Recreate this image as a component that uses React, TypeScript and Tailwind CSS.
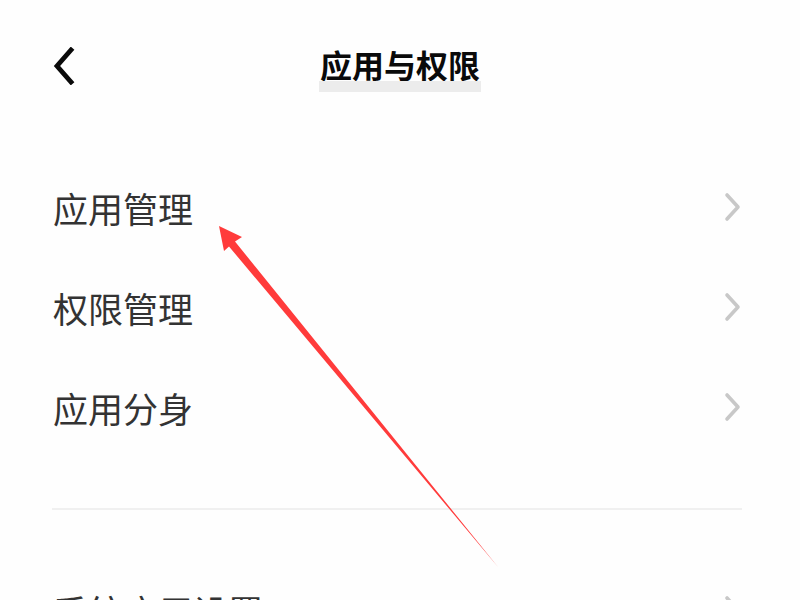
import React from 'react'

/* ─── Šipky ─────────────────────────────────────────── */
function BackIcon() {
  return (
    <svg width="24" height="38" viewBox="0 0 24 38" aria-hidden>
      <path d="M19 3 L5 19 L19 35" fill="none" stroke="#0a0a0a" strokeWidth="4.8" strokeLinecap="square" strokeLinejoin="miter" />
    </svg>
  )
}

function ChevronRight() {
  return (
    <svg width="22" height="30" viewBox="0 0 22 30" aria-hidden>
      <path d="M5 3 L16 15 L5 27" fill="none" stroke="#c8c8c8" strokeWidth="3.6" strokeLinecap="round" strokeLinejoin="round" />
    </svg>
  )
}

const FONT = "font-['Noto_Sans_CJK_SC','Noto_Sans',sans-serif]"

function Row({ label }: { label: string }) {
  return (
    <div className="flex h-[100px] items-center justify-between pl-[53px] pr-[56px]">
      <span className="text-[35px] leading-none text-[#333333]">{label}</span>
      <ChevronRight />
    </div>
  )
}

export default function App() {
  return (
    <div className={`relative h-[600px] w-[800px] overflow-hidden bg-[#fefefe] ${FONT}`}>
      {/* Hlavička */}
      <div className="relative flex h-[132px] items-center justify-center">
        <div className="absolute left-[52px] top-[47px]">
          <BackIcon />
        </div>
        <div className="mt-[6px] flex flex-col items-center">
          <span className="px-[1px] text-[32px] font-bold leading-[34px] text-[#0a0a0a]">应用与权限</span>
          <div className="h-[11px] w-full bg-[#ececec]" />
        </div>
      </div>

      <div className="h-[25px]" />
      <Row label="应用管理" />
      <Row label="权限管理" />
      <Row label="应用分身" />

      <div className="h-[51px]" />
      <div className="ml-[52px] mr-[58px] h-[2px] bg-[#f0f0f0]" />
      <div className="h-[50px]" />
      <Row label="系统应用设置" />

      {/* Červená anotační šipka */}
      <svg className="pointer-events-none absolute left-0 top-0" width="800" height="600" aria-hidden>
        <polygon
          points="219,226 242,237 235,241.5 498,567 229,246.5 224,251"
          fill="#ff3b3b"
        />
      </svg>
    </div>
  )
}
